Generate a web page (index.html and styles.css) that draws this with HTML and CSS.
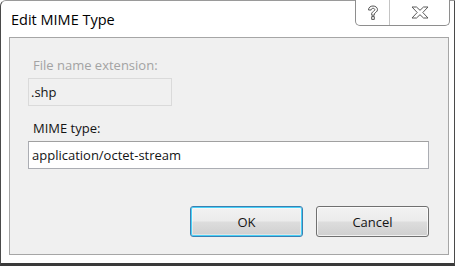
FILE: index.html
```html
<!DOCTYPE html>
<html>
<head>
<meta charset="utf-8">
<link rel="stylesheet" href="styles.css">
</head>
<body>
<div class="window">
  <div class="titlebar">
    <div class="title">Edit MIME Type</div>
    <div class="controls">
      <div class="ctl help">
        <svg width="12" height="16" viewBox="0 0 12 16"><path d="M1.5 5 C1.5 2.4 3.5 1 6 1 C8.7 1 10.5 2.6 10.5 4.7 C10.5 6.8 8 7.6 7.3 8.8 L7.3 10.2 L4.7 10.2 L4.7 8.2 C5.3 6.6 7.8 6 7.8 4.8 C7.8 3.9 7.1 3.3 6 3.3 C5 3.3 4.2 4 4.2 5 Z M4.7 11.6 L7.3 11.6 L7.3 14.4 L4.7 14.4 Z" fill="#fff" stroke="#555" stroke-width="1" stroke-linejoin="round"/></svg>
      </div>
      <div class="ctl close">
        <svg width="18" height="13" viewBox="0 0 18 13"><path d="M1 1 L5.5 1 L9 4.3 L12.5 1 L17 1 L11.8 6.5 L17 12 L12.5 12 L9 8.7 L5.5 12 L1 12 L6.2 6.5 Z" fill="#fff" stroke="#5a5a5a" stroke-width="1" stroke-linejoin="round"/></svg>
      </div>
    </div>
  </div>
  <div class="client">
    <div class="label disabled">File name extension:</div>
    <div class="readonly">.shp</div>
    <div class="label">MIME type:</div>
    <div class="textbox">application/octet-stream</div>
    <div class="buttons">
      <div class="btn default">OK</div>
      <div class="btn">Cancel</div>
    </div>
  </div>
</div>
</body>
</html>
```
FILE: styles.css
```css
* { box-sizing: border-box; }
html, body { margin: 0; padding: 0; background: #fff; }
body { width: 455px; height: 266px; overflow: hidden; font-family: "Open Sans", "Noto Sans", sans-serif; font-size: 13px; color: #141414; }
.window {
  width: 455px; height: 266px;
  background: #fff;
  border: 1px solid #4a4a4a;
  border-top-color: #9a9a9a;
  border-bottom: 3px solid #3a3a3a;
  border-top-left-radius: 6px;
  display: flex; flex-direction: column;
}
.titlebar { height: 36px; display: flex; justify-content: space-between; align-items: flex-start; }
.title { font-size: 14.5px; margin: 10px 0 0 10px; line-height: 18px; color: #000; }
.controls { display: flex; margin-right: 4px; margin-top: -1px; border: 1px solid #8e8e8e; border-top: none; border-radius: 0 0 5px 5px; height: 26px; background: #fff; }
.ctl { display: flex; align-items: center; justify-content: center; height: 100%; }
.help { width: 34px; border-right: 1px solid #c4c4c4; }
.close { width: 59px; }
.client {
  margin: 0 5px 0 8px;
  height: 218px;
  background: #f0f0f0;
  border: 1px solid #a6a6a6;
  padding: 19px 19px 0 18px;
  display: flex; flex-direction: column;
}
.label { line-height: 16px; padding-left: 5px; height: 16px; }
.disabled { color: #a3a3a3; }
.readonly { width: 144px; height: 28px; margin-top: 5px; border: 1px solid #dadada; background: #f0f0f0; padding-left: 2px; line-height: 26px; }
.label + .textbox { margin-top: 5px; }
.readonly + .label { margin-top: 14px; }
.textbox { height: 28px; border: 1px solid #abadb3; border-top-color: #a0a0a0; background: #fff; padding-left: 3px; line-height: 26px; }
.buttons { display: flex; justify-content: flex-end; gap: 13px; margin-top: 37px; }
.btn {
  width: 113px; height: 31px;
  border: 1px solid #707070; border-radius: 3px;
  background: linear-gradient(#f2f2f2 0%, #ebebeb 49%, #dddddd 51%, #cfcfcf 100%);
  box-shadow: inset 0 0 0 1px rgba(255,255,255,0.7);
  display: flex; align-items: center; justify-content: center;
  color: #141414;
}
.default {
  border-color: #3c7fb1;
  box-shadow: inset 0 0 0 1px #48d1f8, inset 0 0 0 2px rgba(255,255,255,0.4);
}
```
